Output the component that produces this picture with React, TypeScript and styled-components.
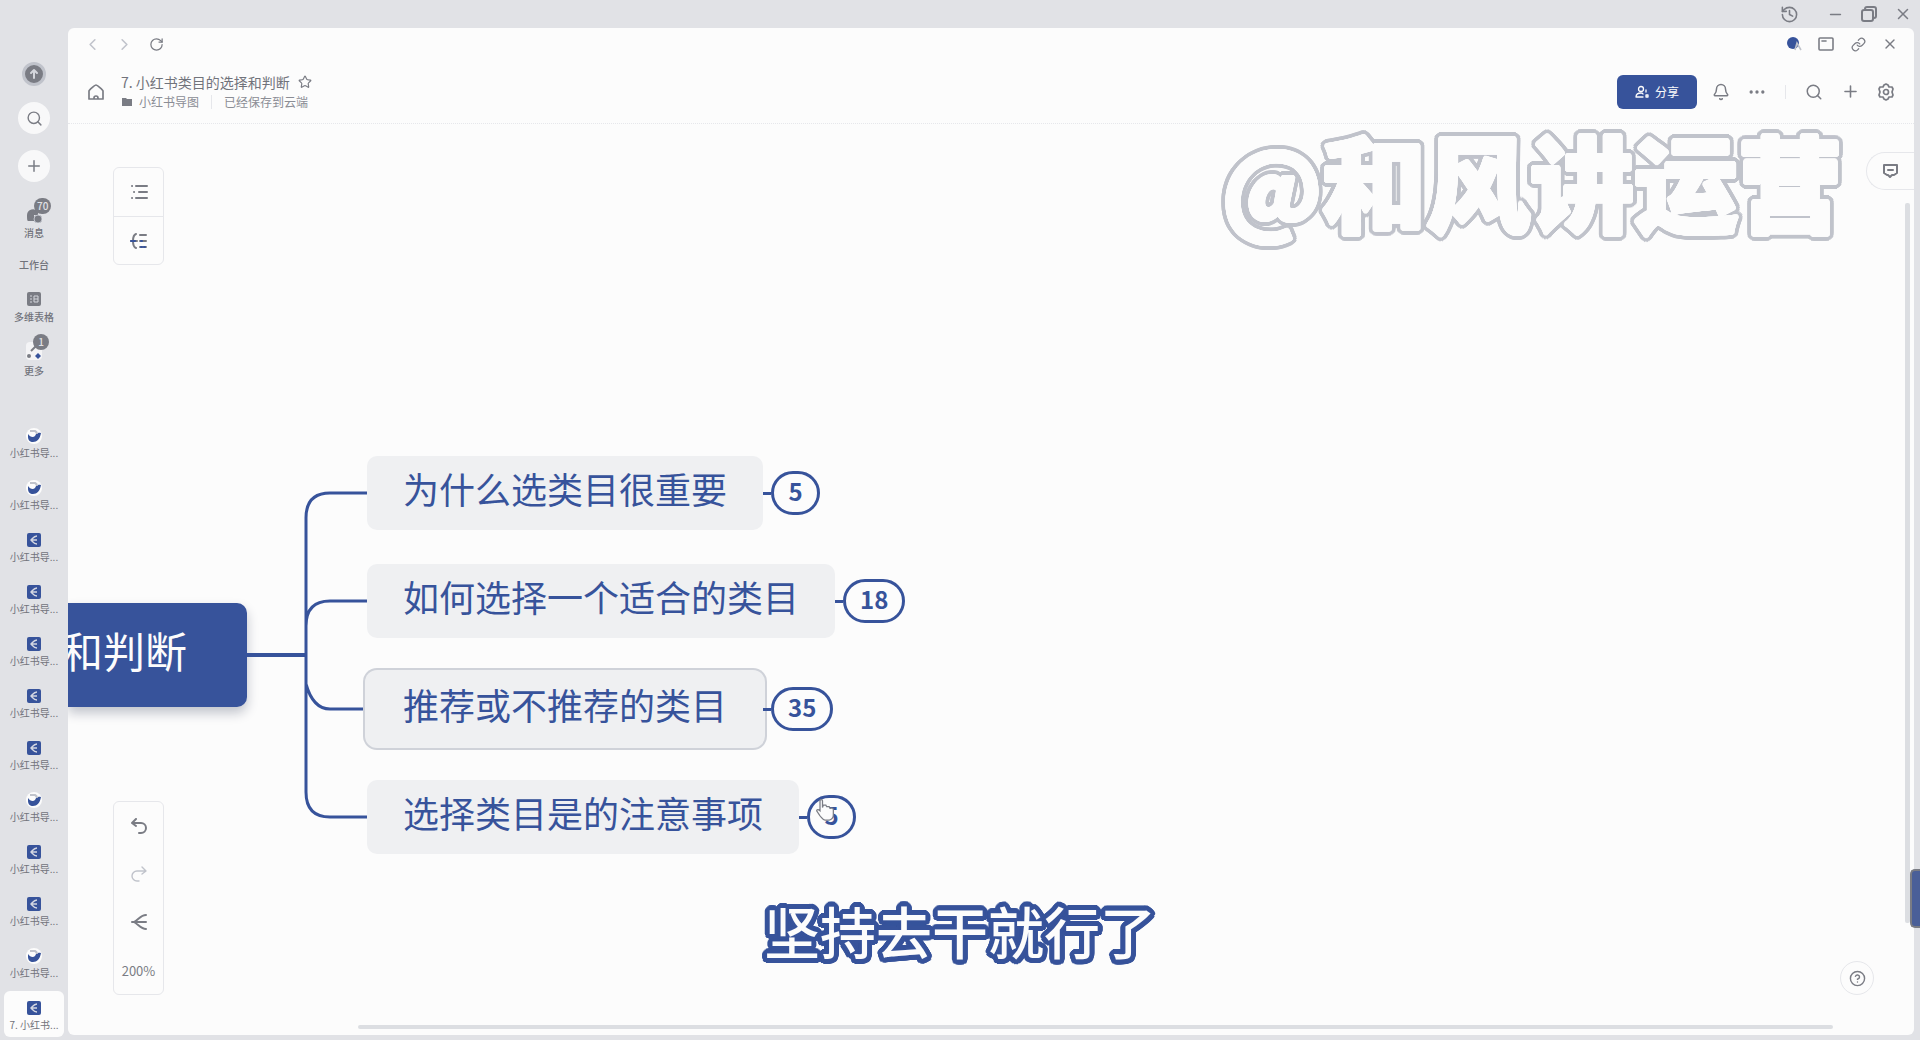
import React from "react";
import styled, { createGlobalStyle, css } from "styled-components";
import {
  Bell,
  ChevronLeft,
  ChevronRight,
  CircleHelp,
  Ellipsis,
  History,
  Link,
  Minus,
  Plus,
  RotateCw,
  Search,
  Star,
  X,
} from "lucide-react";

const color = {
  chrome: "#e1e2e6",
  paper: "#fcfcfc",
  line: "#e6e7eb",
  silver: "#c0c3cb",
  ink: "#7a7c84",
  text: "#71737b",
  blue: "#37539b",
  node: "#eff0f2",
};

/* A ring of hard shadows draws an outline with round corners. */
const ring = (radius: number, tone: string) =>
  Array.from({ length: 24 }, (_, i) => {
    const a = (i * Math.PI) / 12;
    return `${(Math.cos(a) * radius).toFixed(1)}px ${(Math.sin(a) * radius).toFixed(1)}px 0 ${tone}`;
  }).join(", ");

const Global = createGlobalStyle`
  *, *::before, *::after { box-sizing: border-box; }
  body {
    margin: 0;
    background: ${color.chrome};
    color: ${color.text};
    font-family: "Noto Sans CJK SC", "Noto Sans", sans-serif;
    font-size: 12px;
  }
  button { font: inherit; color: inherit; background: none; border: 0; padding: 0; cursor: pointer; }
  svg { display: block; flex: none; }
  h1 { margin: 0; }
`;

const Shell = styled.div`
  display: grid;
  grid-template-columns: 68px minmax(0, 1fr);
  height: 100vh;
  overflow: hidden;
  position: relative;
`;

/* ---------- Sidebar ---------- */

const Sidebar = styled.aside`
  display: flex;
  flex-direction: column;
  align-items: center;
  gap: 16px;
  padding: 62px 4px 3px;
`;

const Round = styled.button<{ $size: number; $tone: "dark" | "light" }>`
  width: ${(p) => p.$size}px;
  height: ${(p) => p.$size}px;
  flex: none;
  border-radius: 50%;
  display: grid;
  place-items: center;
  background: ${(p) => (p.$tone === "dark" ? color.ink : "#f8f8f9")};
  color: ${(p) => (p.$tone === "dark" ? "#d4d6dc" : color.ink)};
  ${(p) => p.$tone === "dark" && css`border: 3px solid ${color.silver};`}
`;

const Nav = styled.nav`
  display: flex;
  flex-direction: column;
  align-items: center;
  gap: 16px;
  margin-top: 7px;
`;

const NavItem = styled.button`
  display: flex;
  flex-direction: column;
  align-items: center;
  font-size: 10px;
  line-height: 16px;
  font-weight: 500;
  white-space: nowrap;
`;

const NavIcon = styled.span`
  position: relative;
  min-height: 20px;
  display: grid;
  place-items: center;
`;

const Count = styled.span`
  position: absolute;
  left: 8px;
  top: -7px;
  min-width: 16px;
  height: 16px;
  padding: 0 3px;
  border-radius: 8px;
  background: ${color.ink};
  color: #e0e1e5;
  font-size: 10px;
  line-height: 16px;
  text-align: center;
`;

const Tabs = styled.div`
  display: flex;
  flex-direction: column;
  align-self: stretch;
  gap: 6px;
  margin-top: auto;
`;

const Tab = styled.button<{ $active?: boolean }>`
  height: 46px;
  padding: 10px 4px 2px;
  display: flex;
  flex-direction: column;
  align-items: center;
  gap: 2px;
  border-radius: 6px;
  font-size: 10px;
  line-height: 16px;
  white-space: nowrap;
  background: ${(p) => (p.$active ? color.paper : "transparent")};
`;

const TabIcon = styled.span`
  height: 14px;
  display: flex;
  align-items: center;
`;

/* ---------- Window ---------- */

const Main = styled.main`
  display: flex;
  flex-direction: column;
  min-width: 0;
  min-height: 0;
  padding: 0 6px 5px 0;
`;

const TitleBar = styled.div`
  height: 28px;
  flex: none;
  display: flex;
  align-items: center;
  justify-content: flex-end;
  gap: 26px;
  padding-right: 1px;
`;

const IconButton = styled.button<{ $muted?: boolean }>`
  width: 20px;
  height: 20px;
  display: grid;
  place-items: center;
  color: ${(p) => (p.$muted ? color.silver : color.ink)};
`;

const Panel = styled.section`
  flex: 1;
  min-height: 0;
  display: flex;
  flex-direction: column;
  background: ${color.paper};
  border-radius: 6px;
  overflow: hidden;
`;

const BrowserBar = styled.div`
  height: 32px;
  flex: none;
  display: flex;
  align-items: center;
  justify-content: space-between;
  padding: 0 14px;
`;

const Group = styled.div<{ $gap: number }>`
  display: flex;
  align-items: center;
  gap: ${(p) => p.$gap}px;
`;

const DocHeader = styled.header`
  height: 64px;
  flex: none;
  display: flex;
  align-items: center;
  justify-content: space-between;
  padding: 0 18px;
  border-bottom: 1px dotted ${color.line};
`;

const DocTitle = styled.h1`
  font-size: 14px;
  line-height: 20px;
  font-weight: 400;
`;

const DocMeta = styled.div`
  display: flex;
  align-items: center;
  gap: 6px;
  font-size: 12px;
  line-height: 20px;
  color: #8b8d95;
`;

const Rule = styled.span<{ $space: number }>`
  width: 1px;
  height: 14px;
  margin: 0 ${(p) => p.$space}px;
  background: ${color.line};
`;

const Share = styled.button`
  width: 80px;
  height: 34px;
  border-radius: 6px;
  display: flex;
  align-items: center;
  justify-content: center;
  gap: 6px;
  background: ${color.blue};
  color: ${color.paper};
  font-size: 12px;
`;

/* ---------- Canvas ---------- */

const Canvas = styled.div`
  flex: 1;
  min-height: 0;
  position: relative;
  overflow: hidden;
`;

const Tools = styled.div<{ $place: "top" | "bottom" }>`
  position: absolute;
  left: 45px;
  ${(p) => (p.$place === "top" ? "top: 43px;" : "bottom: 40px;")}
  width: 51px;
  display: flex;
  flex-direction: column;
  background: ${color.paper};
  border: 1px solid ${color.line};
  border-radius: 6px;
`;

const Tool = styled.button<{ $divided?: boolean; $muted?: boolean }>`
  height: 48px;
  display: grid;
  place-items: center;
  font-size: 13px;
  color: ${(p) => (p.$muted ? color.silver : color.ink)};
  border-top: ${(p) => (p.$divided ? `1px solid ${color.line}` : "0")};
`;

const Map = styled.div`
  position: absolute;
  left: 0;
  top: 332px;
  display: flex;
  align-items: center;
`;

const Root = styled.div`
  width: 179px;
  height: 104px;
  padding-right: 60px;
  display: flex;
  justify-content: flex-end;
  overflow: hidden;
  white-space: nowrap;
  border-radius: 0 10px 10px 0;
  background: ${color.blue};
  color: ${color.paper};
  font-size: 42px;
  line-height: 94px;
  box-shadow: 0 6px 12px ${color.silver};
`;

const Links = styled.svg`
  width: 120px;
  height: 398px;
  fill: none;
  stroke: ${color.blue};
  stroke-width: 3;
`;

const Branches = styled.div`
  display: flex;
  flex-direction: column;
  gap: 34px;
`;

const Branch = styled.div`
  display: flex;
  align-items: center;
`;

const Node = styled.div<{ $selected?: boolean }>`
  height: 74px;
  padding: 0 36px;
  border-radius: 10px;
  background: ${color.node};
  color: ${color.blue};
  font-size: 36px;
  line-height: 64px;
  white-space: nowrap;
  ${(p) =>
    p.$selected &&
    css`
      box-shadow: 0 0 0 2px ${color.node}, 0 0 0 4px #cfd2d9;
    `}
`;

const Stem = styled.span`
  width: 8px;
  height: 3px;
  background: ${color.blue};
`;

const Badge = styled.button`
  position: relative;
  min-width: 49px;
  height: 44px;
  padding: 0 14px 4px;
  border: 3px solid ${color.blue};
  border-radius: 22px;
  background: ${color.paper};
  color: ${color.blue};
  font-size: 24px;
  line-height: 34px;
  font-weight: 700;
`;

const Pointer = styled.svg`
  position: absolute;
  left: 5px;
  top: -1px;
`;

const Watermark = styled.div`
  position: absolute;
  right: 72px;
  top: 2px;
  font-size: 104px;
  line-height: 108px;
  font-weight: 900;
  white-space: nowrap;
  color: ${color.paper};
  text-shadow: ${ring(1, color.paper)}, ${ring(2, color.paper)}, ${ring(4, color.silver)},
    ${ring(6, color.silver)};
  pointer-events: none;
`;

const At = styled.span`
  font-size: 96px;
`;

const CommentTab = styled.button`
  position: absolute;
  right: 0;
  top: 28px;
  width: 48px;
  height: 38px;
  border: 1px solid ${color.line};
  border-right: 0;
  border-radius: 19px 0 0 19px;
  display: grid;
  place-items: center;
  background: ${color.paper};
  color: ${color.ink};
`;

const Help = styled.button`
  position: absolute;
  right: 40px;
  bottom: 40px;
  width: 34px;
  height: 34px;
  border-radius: 50%;
  border: 1px solid ${color.line};
  display: grid;
  place-items: center;
  background: ${color.paper};
  color: ${color.ink};
`;

const ScrollX = styled.div`
  position: absolute;
  left: 290px;
  right: 81px;
  bottom: 6px;
  height: 4px;
  border-radius: 2px;
  background: #dcdee2;
`;

const ScrollY = styled.div`
  position: absolute;
  right: 4px;
  top: 79px;
  bottom: 112px;
  width: 5px;
  border-radius: 2px;
  background: #dcdee2;
`;

const EdgeHandle = styled.button`
  position: absolute;
  right: 0;
  bottom: 112px;
  width: 10px;
  height: 59px;
  border: 2px solid ${color.ink};
  border-right: 0;
  border-radius: 5px 0 0 5px;
  background: #4a5f98;
`;

const Caption = styled.p`
  position: absolute;
  left: 0;
  right: 0;
  bottom: 68px;
  margin: 0;
  text-align: center;
  font-size: 56px;
  line-height: 84px;
  font-weight: 500;
  color: ${color.paper};
  text-shadow: ${ring(3, color.blue)}, ${ring(5, color.blue)};
  pointer-events: none;
`;

/* ---------- Drawings ---------- */

const stroke = {
  fill: "none",
  stroke: "currentColor",
  strokeWidth: 2,
  strokeLinecap: "round" as const,
  strokeLinejoin: "round" as const,
};

const UpIcon = () => (
  <svg width="12" height="12" viewBox="0 0 12 12" {...stroke}>
    <path d="M6 10V2M3 5l3-3 3 3" />
  </svg>
);

const ChatIcon = () => (
  <svg width="16" height="16" viewBox="0 0 16 16" fill={color.ink}>
    <path d="M1 8a6 6 0 0 1 11-3v3H8v6H2c-1 0-1-4-1-6z" />
    <circle cx="12" cy="12" r="4" stroke={color.silver} />
  </svg>
);

const SheetIcon = () => (
  <svg width="14" height="14" viewBox="0 0 14 14">
    <rect width="14" height="14" rx="2" fill={color.ink} />
    <path d="M3 4h2M3 7h2M3 10h2M7 4h4M7 7h4M7 10h4M7 4v6M11 4v6" stroke="#d4d6dc" fill="none" />
  </svg>
);

const MoreIcon = () => (
  <svg width="18" height="22" viewBox="0 0 18 22">
    <rect x="1" y="1" width="16" height="18" rx="4" fill="#f4f4f6" />
    <path d="M6 10l6-6" stroke={color.ink} strokeWidth="2" />
    <circle cx="4" cy="15" r="2" fill={color.ink} />
    <path d="M13 12l3 3-3 3-3-3z" fill={color.blue} />
  </svg>
);

const BirdIcon = () => (
  <svg width="16" height="16" viewBox="0 0 16 16">
    <circle cx="8" cy="8" r="8" fill={color.paper} />
    <path d="M2 6c2 3 5 4 7 2 1-3 3-4 6-3-1 6-4 9-8 9-3 0-5-2-5-5z" fill={color.blue} />
    <path d="M4 3h5c2 1 2 2 2 3" fill="none" stroke={color.silver} strokeWidth="2" />
  </svg>
);

const MindIcon = () => (
  <svg width="14" height="14" viewBox="0 0 14 14">
    <rect width="14" height="14" rx="2" fill={color.blue} />
    <path d="M10 3c-3 0-4 2-6 4 2 2 3 4 6 4M4 7h6" fill="none" stroke="#d4d7e2" strokeWidth="1.4" />
  </svg>
);

const RestoreIcon = () => (
  <svg width="16" height="16" viewBox="0 0 16 16" {...stroke}>
    <rect x="1" y="4" width="11" height="11" rx="2" />
    <path d="M4 4V3a2 2 0 0 1 2-2h7a2 2 0 0 1 2 2v7a2 2 0 0 1-2 2h-1" />
  </svg>
);

const WindowIcon = () => (
  <svg width="16" height="14" viewBox="0 0 16 14" {...stroke} strokeWidth="1.6">
    <rect x="1" y="1" width="14" height="12" rx="1" />
    <path d="M4 4h4" />
  </svg>
);

const SparkIcon = () => (
  <svg width="16" height="14" viewBox="0 0 16 14">
    <circle cx="7" cy="6" r="6" fill={color.blue} />
    <path d="M9 13l2-7 4 7" fill="none" stroke={color.silver} strokeWidth="1.6" />
  </svg>
);

const FolderIcon = () => (
  <svg width="12" height="10" viewBox="0 0 12 10" fill={color.ink}>
    <path d="M1 1h4l1 1h5v7H1z" />
  </svg>
);

const HomeIcon = () => (
  <svg width="18" height="18" viewBox="0 0 18 18" {...stroke} strokeWidth="1.7">
    <path d="M2 8c0-1 6-6 7-6s7 5 7 6v8H2zM7 16v-1a2 2 0 0 1 4 0v1" />
  </svg>
);

const GearIcon = () => (
  <svg width="18" height="18" viewBox="0 0 18 18" {...stroke} strokeWidth="1.7">
    <path d="M7 2l2-1 2 1 1 2 3 0 1 2-1 3 1 3-1 2-3 0-1 2-2 1-2-1-1-2-3 0-1-2 1-3-1-3 1-2 3 0z" />
    <circle cx="9" cy="9" r="2.5" />
  </svg>
);

const PeopleIcon = () => (
  <svg width="14" height="14" viewBox="0 0 14 14" {...stroke} strokeWidth="1.3">
    <circle cx="6" cy="4" r="2.5" />
    <path d="M1 12c0-3 2-4 5-4 1 0 2 0 2 1M1 12h7M11 5v2M11 10v2h2v-2z" />
  </svg>
);

const OutlineIcon = () => (
  <svg width="18" height="16" viewBox="0 0 18 16" {...stroke}>
    <path d="M2 2h.1M6 2h11M4 8h.1M9 8h8M2 14h.1M6 14h11" />
  </svg>
);

const TreeIcon = () => (
  <svg width="18" height="16" viewBox="0 0 18 16" {...stroke}>
    <path d="M6 1C3 2 3 5 3 8s0 6 3 7M1 8h6M10 2h6M10 8h6M10 14h6" />
    <path d="M1 8h4M11 8h1M11 14h1M14 14h1" stroke={color.blue} />
  </svg>
);

const UndoIcon = ({ flip = false }: { flip?: boolean }) => (
  <svg width="16" height="16" viewBox="0 0 16 16" {...stroke} strokeWidth={flip ? 1.4 : 2}>
    {flip ? (
      <path d="M11 1l4 4-4 3M15 5H6a5 5 0 0 0 0 10h2" />
    ) : (
      <path d="M5 1L1 5l4 3M1 5h9a5 5 0 0 1 0 10H8" />
    )}
  </svg>
);

const BranchIcon = () => (
  <svg width="16" height="16" viewBox="0 0 16 16" {...stroke}>
    <path d="M15 1C10 1 8 5 3 8c5 3 7 7 12 7M1 8h14" />
  </svg>
);

const CommentIcon = () => (
  <svg width="15" height="14" viewBox="0 0 15 14" {...stroke}>
    <path d="M1 1h13v8l-3 2H9l-2 2-2-2H4L1 9zM5 6h5" />
  </svg>
);

/* ---------- Data ---------- */

const tabs: ("bird" | "mind")[] = [
  "bird", "bird", "mind", "mind", "mind", "mind",
  "mind", "bird", "mind", "mind", "bird",
];

const topics = [
  { label: "为什么选类目很重要", count: 5 },
  { label: "如何选择一个适合的类目", count: 18 },
  { label: "推荐或不推荐的类目", count: 35, selected: true },
  { label: "选择类目是的注意事项", count: 5, hovered: true },
];

export default function App() {
  return (
    <>
      <Global />
      <Shell>
        <Sidebar>
          <Round $size={24} $tone="dark" aria-label="头像"><UpIcon /></Round>
          <Round $size={32} $tone="light" aria-label="搜索"><Search size={17} /></Round>
          <Round $size={32} $tone="light" aria-label="新建"><Plus size={18} /></Round>
          <Nav>
            <NavItem><NavIcon><ChatIcon /><Count>70</Count></NavIcon>消息</NavItem>
            <NavItem>工作台</NavItem>
            <NavItem><NavIcon><SheetIcon /></NavIcon>多维表格</NavItem>
            <NavItem><NavIcon><MoreIcon /><Count>1</Count></NavIcon>更多</NavItem>
          </Nav>
          <Tabs>
            {tabs.map((kind, i) => (
              <Tab key={i}>
                <TabIcon>{kind === "bird" ? <BirdIcon /> : <MindIcon />}</TabIcon>
                小红书导...
              </Tab>
            ))}
            <Tab $active><TabIcon><MindIcon /></TabIcon>7. 小红书...</Tab>
          </Tabs>
        </Sidebar>

        <Main>
          <TitleBar>
            <IconButton aria-label="历史"><History size={19} /></IconButton>
            <Group $gap={14}>
              <IconButton aria-label="最小化"><Minus size={17} /></IconButton>
              <IconButton aria-label="还原"><RestoreIcon /></IconButton>
              <IconButton aria-label="关闭"><X size={18} /></IconButton>
            </Group>
          </TitleBar>

          <Panel>
            <BrowserBar>
              <Group $gap={12}>
                <IconButton $muted aria-label="后退"><ChevronLeft size={19} /></IconButton>
                <IconButton $muted aria-label="前进"><ChevronRight size={19} /></IconButton>
                <IconButton aria-label="刷新"><RotateCw size={15} /></IconButton>
              </Group>
              <Group $gap={12}>
                <IconButton aria-label="助手"><SparkIcon /></IconButton>
                <IconButton aria-label="窗口"><WindowIcon /></IconButton>
                <IconButton aria-label="复制链接"><Link size={15} /></IconButton>
                <IconButton aria-label="关闭页面"><X size={16} /></IconButton>
              </Group>
            </BrowserBar>

            <DocHeader>
              <Group $gap={15}>
                <IconButton aria-label="主页"><HomeIcon /></IconButton>
                <div>
                  <Group $gap={8}>
                    <DocTitle>7. 小红书类目的选择和判断</DocTitle>
                    <Star size={14} color={color.ink} />
                  </Group>
                  <DocMeta>
                    <FolderIcon />
                    小红书导图
                    <Rule $space={6} />
                    已经保存到云端
                  </DocMeta>
                </div>
              </Group>
              <Group $gap={14}>
                <Share><PeopleIcon />分享</Share>
                <Group $gap={16}>
                  <IconButton aria-label="通知"><Bell size={18} /></IconButton>
                  <IconButton aria-label="更多操作"><Ellipsis size={20} /></IconButton>
                  <Rule $space={2} />
                  <IconButton aria-label="查找"><Search size={18} /></IconButton>
                  <IconButton aria-label="添加"><Plus size={19} /></IconButton>
                  <IconButton aria-label="设置"><GearIcon /></IconButton>
                </Group>
              </Group>
            </DocHeader>

            <Canvas>
              <Map>
                <Root>和判断</Root>
                <Links viewBox="0 0 120 398">
                  <path d="M0 199H59" strokeWidth="4" />
                  <path d="M59 199V62Q59 37 83 37H120M59 199V170Q59 145 83 145H120" />
                  <path d="M59 199V336Q59 361 83 361H120M59 199V228Q66 253 83 253H117" />
                </Links>
                <Branches>
                  {topics.map((t) => (
                    <Branch key={t.label}>
                      <Node $selected={t.selected}>{t.label}</Node>
                      <Stem />
                      <Badge>
                        {t.count}
                        {t.hovered && (
                          <Pointer width="20" height="26" viewBox="0 0 24 28">
                            <path
                              d="M6 3c0-2 3-2 3 0v8l1-3h3l1 2h3l1 2c3-1 4 0 4 2v6c0 3-2 6-5 6h-5c-3 0-4-3-6-5l-4-6c0-2 2-2 4 0z"
                              fill={color.paper}
                              stroke={color.ink}
                              strokeWidth="1.5"
                            />
                          </Pointer>
                        )}
                      </Badge>
                    </Branch>
                  ))}
                </Branches>
              </Map>

              <Tools $place="top">
                <Tool aria-label="大纲"><OutlineIcon /></Tool>
                <Tool $divided aria-label="导图"><TreeIcon /></Tool>
              </Tools>
              <Tools $place="bottom">
                <Tool aria-label="撤销"><UndoIcon /></Tool>
                <Tool $muted aria-label="重做"><UndoIcon flip /></Tool>
                <Tool aria-label="分支"><BranchIcon /></Tool>
                <Tool>200%</Tool>
              </Tools>

              <Watermark><At>@</At>和风讲运营</Watermark>
              <CommentTab aria-label="评论"><CommentIcon /></CommentTab>
              <ScrollX />
              <ScrollY />
              <Help aria-label="帮助"><CircleHelp size={17} /></Help>
            </Canvas>
          </Panel>
        </Main>
        <EdgeHandle aria-label="展开侧栏" />
        <Caption>坚持去干就行了</Caption>
      </Shell>
    </>
  );
}
